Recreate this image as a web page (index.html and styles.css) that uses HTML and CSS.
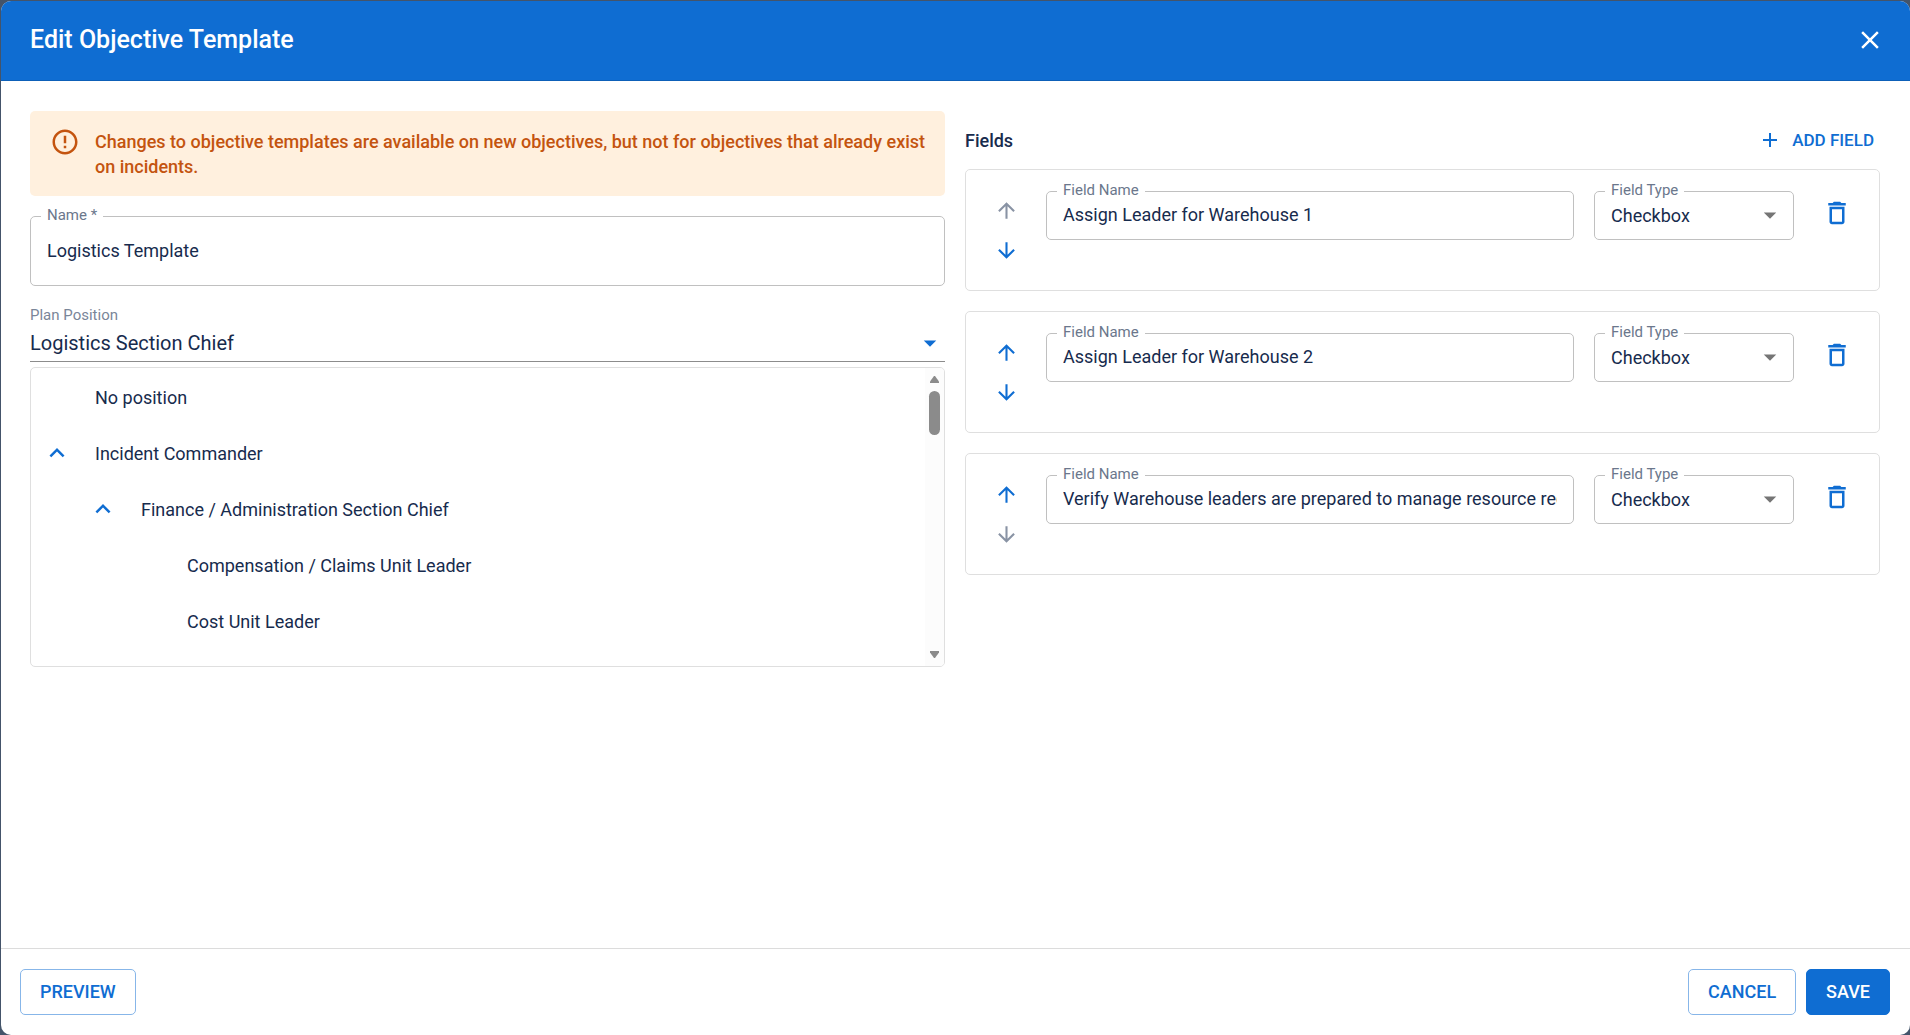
FILE: index.html
```html
<!DOCTYPE html>
<html lang="en">
<head>
  <meta charset="UTF-8">
  <meta name="viewport" content="width=device-width, initial-scale=1.0">
  <title>Edit Objective Template</title>
  <link rel="stylesheet" href="styles.css">
</head>
<body>
  <svg class="sprite" aria-hidden="true">
    <symbol id="icon-up" viewBox="0 0 24 24"><path d="M4 12l1.41 1.41L11 7.83V20h2V7.83l5.58 5.59L20 12l-8-8-8 8z"/></symbol>
    <symbol id="icon-down" viewBox="0 0 24 24"><path d="M20 12l-1.41-1.41L13 16.17V4h-2v12.17l-5.58-5.59L4 12l8 8 8-8z"/></symbol>
    <symbol id="icon-caret" viewBox="0 0 24 24"><path d="M7 10l5 5 5-5z"/></symbol>
    <symbol id="icon-chevron" viewBox="0 0 24 24"><path d="M12 8l-6 6 1.41 1.41L12 10.83l4.59 4.58L18 14z"/></symbol>
    <symbol id="icon-delete" viewBox="0 0 24 24"><path d="M6 19c0 1.1.9 2 2 2h8c1.1 0 2-.9 2-2V7H6v12zM8 9h8v10H8V9zm7.5-5l-1-1h-5l-1 1H5v2h14V4h-3.5z"/></symbol>
  </svg>

  <div class="dialog" role="dialog" aria-labelledby="dialog-title">
    <header class="dialog-header">
      <h1 id="dialog-title">Edit Objective Template</h1>
      <button class="icon-button close" type="button" aria-label="Close">
        <svg class="icon" viewBox="0 0 24 24"><path d="M19 6.41L17.59 5 12 10.59 6.41 5 5 6.41 10.59 12 5 17.59 6.41 19 12 13.41 17.59 19 19 17.59 13.41 12z"/></svg>
      </button>
    </header>

    <main class="dialog-body">
      <section class="column">
        <div class="alert" role="alert">
          <svg class="icon" viewBox="0 0 24 24"><path d="M11 15h2v2h-2zm0-8h2v6h-2zm.99-5C6.47 2 2 6.48 2 12s4.47 10 9.99 10C17.52 22 22 17.52 22 12S17.52 2 11.99 2zM12 20c-4.42 0-8-3.58-8-8s3.58-8 8-8 8 3.58 8 8-3.58 8-8 8z"/></svg>
          <p>Changes to objective templates are available on new objectives, but not for objectives that already exist on incidents.</p>
        </div>

        <div class="outlined tall">
          <label for="name">Name *</label>
          <input type="text" id="name" value="Logistics Template">
        </div>

        <div class="position">
          <label for="position">Plan Position</label>
          <div class="position-value">
            <input type="text" id="position" value="Logistics Section Chief" role="combobox" aria-expanded="true" aria-controls="position-list" readonly>
            <svg class="icon"><use href="#icon-caret"/></svg>
          </div>
        </div>

        <div class="tree">
          <ul class="tree-list" id="position-list">
            <li>No position</li>
            <li><button class="icon-button toggle" type="button" aria-label="Collapse"><svg class="icon"><use href="#icon-chevron"/></svg></button>Incident Commander</li>
            <li class="level-1"><button class="icon-button toggle" type="button" aria-label="Collapse"><svg class="icon"><use href="#icon-chevron"/></svg></button>Finance / Administration Section Chief</li>
            <li class="level-2">Compensation / Claims Unit Leader</li>
            <li class="level-2">Cost Unit Leader</li>
          </ul>
          <div class="scrollbar" aria-hidden="true">
            <svg class="scroll-arrow" viewBox="0 0 9 7"><path d="M4 0h1l4 5.5V7H0V5.500z"/></svg>
            <div class="scroll-thumb"></div>
            <svg class="scroll-arrow end" viewBox="0 0 9 7"><path d="M4 7h1l4-5.500V0H0v1.500z"/></svg>
          </div>
        </div>
      </section>

      <section class="column">
        <div class="fields-header">
          <h2>Fields</h2>
          <button class="add-field" type="button">
            <svg class="icon" viewBox="0 0 24 24"><path d="M19 13h-6v6h-2v-6H5v-2h6V5h2v6h6v2z"/></svg>
            ADD FIELD
          </button>
        </div>

        <div class="cards">
          <div class="card">
            <div class="order">
              <button class="icon-button" type="button" aria-label="Move up" disabled><svg class="icon"><use href="#icon-up"/></svg></button>
              <button class="icon-button" type="button" aria-label="Move down"><svg class="icon"><use href="#icon-down"/></svg></button>
            </div>
            <div class="outlined field-name">
              <label for="field-name-1">Field Name</label>
              <input type="text" id="field-name-1" value="Assign Leader for Warehouse 1">
            </div>
            <div class="outlined field-type">
              <label for="field-type-1">Field Type</label>
              <select id="field-type-1"><option>Checkbox</option></select>
              <svg class="icon"><use href="#icon-caret"/></svg>
            </div>
            <button class="icon-button delete" type="button" aria-label="Delete field"><svg class="icon"><use href="#icon-delete"/></svg></button>
          </div>

          <div class="card">
            <div class="order">
              <button class="icon-button" type="button" aria-label="Move up"><svg class="icon"><use href="#icon-up"/></svg></button>
              <button class="icon-button" type="button" aria-label="Move down"><svg class="icon"><use href="#icon-down"/></svg></button>
            </div>
            <div class="outlined field-name">
              <label for="field-name-2">Field Name</label>
              <input type="text" id="field-name-2" value="Assign Leader for Warehouse 2">
            </div>
            <div class="outlined field-type">
              <label for="field-type-2">Field Type</label>
              <select id="field-type-2"><option>Checkbox</option></select>
              <svg class="icon"><use href="#icon-caret"/></svg>
            </div>
            <button class="icon-button delete" type="button" aria-label="Delete field"><svg class="icon"><use href="#icon-delete"/></svg></button>
          </div>

          <div class="card">
            <div class="order">
              <button class="icon-button" type="button" aria-label="Move up"><svg class="icon"><use href="#icon-up"/></svg></button>
              <button class="icon-button" type="button" aria-label="Move down" disabled><svg class="icon"><use href="#icon-down"/></svg></button>
            </div>
            <div class="outlined field-name">
              <label for="field-name-3">Field Name</label>
              <input type="text" id="field-name-3" value="Verify Warehouse leaders are prepared to manage resource requests">
            </div>
            <div class="outlined field-type">
              <label for="field-type-3">Field Type</label>
              <select id="field-type-3"><option>Checkbox</option></select>
              <svg class="icon"><use href="#icon-caret"/></svg>
            </div>
            <button class="icon-button delete" type="button" aria-label="Delete field"><svg class="icon"><use href="#icon-delete"/></svg></button>
          </div>
        </div>
      </section>
    </main>

    <footer class="dialog-footer">
      <button class="button" type="button">PREVIEW</button>
      <div class="actions">
        <button class="button" type="button">CANCEL</button>
        <button class="button primary" type="button">SAVE</button>
      </div>
    </footer>
  </div>
</body>
</html>
```

FILE: styles.css
```css
* {
  box-sizing: border-box;
}
body {
  margin: 0;
  padding: 1px 0 0 1px;
  height: 100vh;
  background: #44546a;
  font-family: Roboto, sans-serif;
  font-size: 18px;
  line-height: 25px;
  color: #172b4d;
}
h1, h2, p, ul {
  margin: 0;
  padding: 0;
}
input, select, button {
  font: inherit;
  color: inherit;
  border: none;
  background: none;
  padding: 0;
  margin: 0;
}
button {
  cursor: pointer;
}
.sprite {
  display: none;
}
.icon {
  width: 30px;
  height: 30px;
  flex: none;
  fill: currentColor;
}
.icon-button {
  display: flex;
  color: #0f6dd2;
}
.icon-button:disabled {
  color: #8993a4;
  cursor: default;
}

/* dialog */
.dialog {
  display: flex;
  flex-direction: column;
  height: 100%;
  background: #fff;
  border-radius: 10px;
  overflow: hidden;
}
.dialog-header {
  display: flex;
  align-items: center;
  justify-content: space-between;
  height: 80px;
  padding: 0 25px 1px 29px;
  background: #0f6dd2;
  border-bottom: 1px solid #0d60b8;
  color: #fff;
}
.dialog-header h1 {
  font-size: 25px;
  line-height: 32px;
  font-weight: 500;
}
.close {
  color: #fff;
}
.dialog-body {
  flex: 1;
  display: grid;
  grid-template-columns: 1fr 1fr;
  gap: 20px;
  padding: 30px 30px 30px 29px;
  align-items: start;
}
.column {
  min-width: 0;
}

/* left column */
.alert {
  display: flex;
  gap: 15px;
  padding: 16px 12px 17px 20px;
  margin-bottom: 20px;
  border-radius: 5px;
  background: #fff0de;
  color: #c4540f;
  font-weight: 500;
}
.alert p {
  padding-top: 2px;
}
.outlined {
  position: relative;
  display: flex;
  height: 49px;
  border: 1px solid #c0c0c0;
  border-radius: 5px;
}
.outlined.tall {
  height: 70px;
}
.outlined label {
  position: absolute;
  top: -12px;
  left: 10px;
  padding: 0 6px;
  background: #fff;
  font-size: 15px;
  line-height: 20px;
  color: #6b778c;
}
.outlined input, .outlined select {
  flex: 1;
  min-width: 0;
  margin: 0 16px;
  appearance: none;
  outline: none;
}
.outlined input {
  padding-bottom: 2px;
}
.position {
  margin-top: 19px;
  border-bottom: 1px solid #8c8c8c;
}
.position label {
  display: block;
  font-size: 15px;
  line-height: 20px;
  color: #7a8699;
}
.position-value {
  display: flex;
  align-items: center;
  height: 36px;
  color: #0f6dd2;
}
.position-value input {
  flex: 1;
  color: #172b4d;
  font-size: 20px;
  outline: none;
}
.tree {
  display: flex;
  height: 300px;
  margin-top: 5px;
  border: 1px solid #dfdfdf;
  border-radius: 5px;
  overflow: hidden;
}
.tree-list {
  flex: 1;
  padding-top: 1px;
  list-style: none;
}
.tree-list li {
  display: flex;
  align-items: center;
  height: 56px;
  padding-left: 64px;
}
.tree-list .level-1 {
  padding-left: 110px;
}
.tree-list .level-2 {
  padding-left: 156px;
}
.toggle {
  margin-left: -53px;
  margin-right: 23px;
}
.scrollbar {
  display: flex;
  flex-direction: column;
  align-items: center;
  width: 19px;
  padding: 8px 0;
  background: #fcfcfc;
}
.scroll-arrow {
  width: 9px;
  height: 7px;
  fill: #8b8b8b;
}
.scroll-arrow.end {
  margin-top: auto;
}
.scroll-thumb {
  width: 11px;
  height: 44px;
  margin-top: 8px;
  border-radius: 6px;
  background: #8b8b8b;
}

/* right column */
.fields-header {
  display: flex;
  align-items: center;
  justify-content: space-between;
  height: 58px;
}
.fields-header h2 {
  font-size: 18px;
  font-weight: 500;
}
.add-field {
  display: flex;
  align-items: center;
  gap: 10px;
  padding-right: 6px;
  color: #0f6dd2;
  font-size: 17px;
  font-weight: 500;
}
.add-field .icon {
  width: 24px;
  height: 24px;
}
.cards {
  display: flex;
  flex-direction: column;
  gap: 20px;
}
.card {
  display: flex;
  align-items: flex-start;
  padding: 21px 27px 20px 28px;
  border: 1px solid #dfdfdf;
  border-radius: 5px;
}
.order {
  display: flex;
  flex-direction: column;
  gap: 15px;
  padding: 7px 0;
  margin-right: 27px;
}
.order .icon {
  width: 25px;
  height: 25px;
}
.field-name {
  flex: 1;
  margin-right: 20px;
}
.field-type {
  width: 200px;
  margin-right: 28px;
}
.field-type .icon {
  position: absolute;
  top: 8px;
  right: 8px;
  color: #757575;
  pointer-events: none;
}
.delete {
  padding-top: 7px;
}

/* footer */
.dialog-footer {
  display: flex;
  justify-content: space-between;
  padding: 20px 20px 20px 19px;
  border-top: 1px solid #dcdcdc;
}
.actions {
  display: flex;
  gap: 10px;
}
.button {
  height: 46px;
  padding: 0 19px 1px;
  border: 1px solid #87b6e9;
  border-radius: 5px;
  color: #0f6dd2;
  font-weight: 500;
}
.button.primary {
  border-color: #0f6dd2;
  background: #0f6dd2;
  color: #fff;
}
```
